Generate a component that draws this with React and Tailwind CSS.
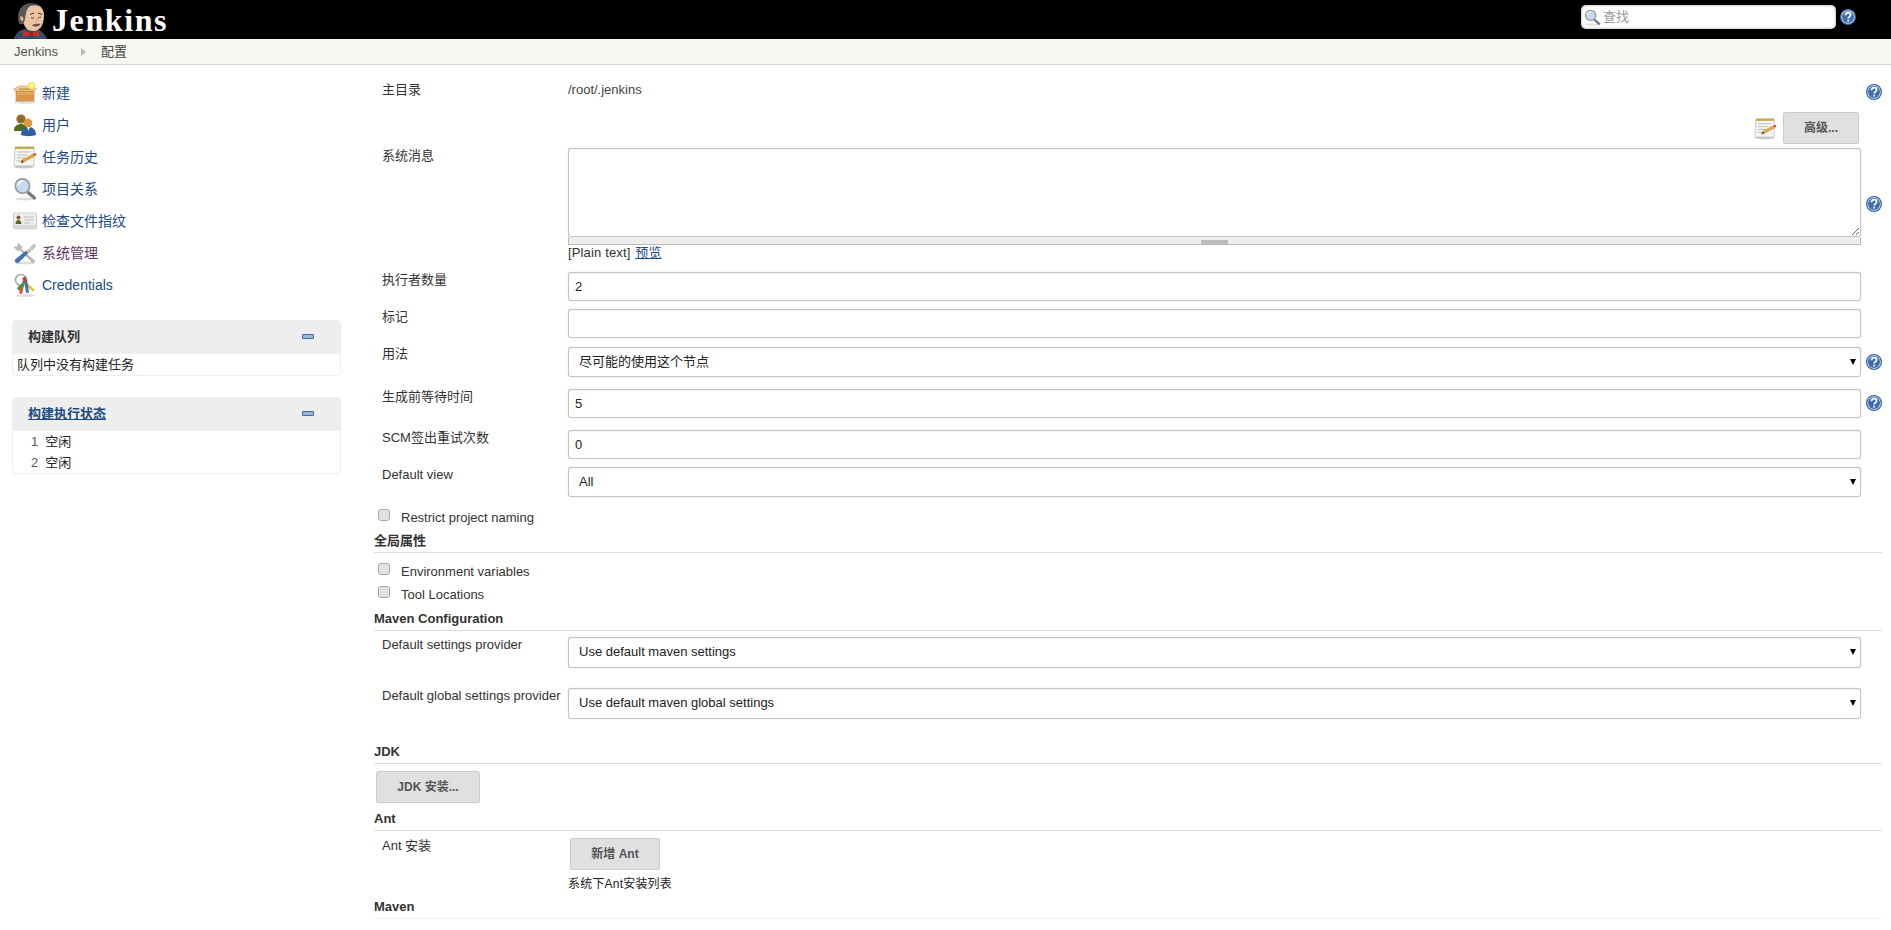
import React from "react";

const HelpIcon = ({ className = "" }) => (
  <svg viewBox="0 0 16 16" className={`w-4 h-4 shrink-0 ${className}`}>
    <circle cx="8" cy="8" r="8" fill="#3c66a8" />
    <circle cx="8" cy="8" r="6.700" fill="#e8eef6" />
    <circle cx="8" cy="8" r="6" fill="#3f6cae" />
    <path d="M5.500 6.200c0-1.600 1.100-2.500 2.600-2.500s2.500.9 2.500 2.200c0 1.900-2.400 1.800-2.400 3.600" fill="none" stroke="#fff" strokeWidth="1.700" />
    <rect x="7.300" y="10.700" width="1.800" height="1.800" fill="#fff" />
  </svg>
);

const Butler = () => (
  <svg viewBox="0 0 34 36" className="w-[34px] h-[36px] shrink-0">
    <path d="M0 36c1-5 5-9 11-10h11c5 1 9 5 11 10z" fill="#2f5068" />
    <path d="M7 12C7 5 12 1 19 1c7 0 11 5 11 11 0 9-3 16-11 16-5 0-8-3-9-7-2-1-3-5-3-9z" fill="#edc4a2" />
    <path d="M5 20C2 11 6 2 14 .5c5-.7 10 0 14 4-5-2.500-10-2.500-13-.5-2 2-3 5-3.500 9 0 2-1 5-1.500 6.500-1 2-3.500 2.500-5 .5z" fill="#55585a" />
    <path d="M7.500 13c-2 0-2 4 .5 5 2 0 2-4-.5-5z" fill="#e3b08c" />
    <path d="M16 11.500l4-1.500M24 10l4 1.500" stroke="#333" strokeWidth="1" fill="none" />
    <path d="M17 14.500c1 .8 2 .8 3 0M24 14c1 .8 2 .8 3 0" stroke="#222" strokeWidth="0.900" fill="none" />
    <path d="M23 15c0 2-.5 3.500-2 4.500" stroke="#c08d68" strokeWidth="0.800" fill="none" />
    <path d="M18 22c3-1.500 6-1.500 9-1-1.500 1-2.500 2.500-5 2.500-2 0-3-.5-4-1.500z" fill="#6b5346" />
    <path d="M9 27.500l5 1.500 3 1.500 3-1.500 5-1.500v7l-5-2-3-.5-3 .5-5 2z" fill="#d42c22" />
    <rect x="15.300" y="29.500" width="3.400" height="3.200" fill="#a81a14" />
  </svg>
);

const NewIcon = () => (
  <svg viewBox="0 0 24 24" className="w-6 h-6 shrink-0">
    <ellipse cx="12" cy="21" rx="11" ry="1.800" fill="#ddd" />
    <path d="M3 10h18v10H3z" fill="#e3a85c" stroke="#b07a35" strokeWidth="0.600" />
    <path d="M3 14h18v6H3z" fill="#d9954a" />
    <path d="M3 10L0.500 8l6-3h11l6 3L21 10z" fill="#f2cf95" stroke="#b98a4a" strokeWidth="0.500" />
    <path d="M6 8h12" stroke="#b98a4a" strokeWidth="1.200" />
    <circle cx="18.500" cy="4.500" r="3.600" fill="#f6ec3f" />
    <circle cx="18.500" cy="4.500" r="1.800" fill="#fffcc0" />
  </svg>
);

const UsersIcon = () => (
  <svg viewBox="0 0 24 24" className="w-6 h-6 shrink-0">
    <circle cx="8" cy="6" r="4.600" fill="#8f6a2e" />
    <path d="M1 18c0-5 3-7 7-7s7 2 7 7z" fill="#556b1f" />
    <circle cx="15" cy="10" r="4.400" fill="#e0993c" />
    <path d="M8 22c0-5 3-8 7.500-8S23 17 23 22c-4 1.500-11 1.500-15 0z" fill="#2f5f9e" />
    <path d="M14 14h3l-1.500 4z" fill="#fff" />
  </svg>
);

const NotepadIcon = ({ className = "w-6 h-6" }) => (
  <svg viewBox="0 0 24 24" className={`shrink-0 ${className}`}>
    <ellipse cx="11" cy="22" rx="10" ry="1.500" fill="#ccc" />
    <path d="M2 3h19v18H1z" fill="#f4f4f0" stroke="#aaa" strokeWidth="0.600" />
    <rect x="2" y="1.500" width="19" height="2.500" fill="#c6a94e" />
    <path d="M4.500 7h13M4 10h10M4 13h8M3.500 16h6" stroke="#bbb" strokeWidth="1" />
    <path d="M8 18l1-3 11-6 2 2-11 6z" fill="#e8a93a" stroke="#a3742a" strokeWidth="0.400" />
    <path d="M20 9l2 2 1.500-1.500-1.500-1.500z" fill="#d9352c" />
    <path d="M8 18l1-3 2 2z" fill="#4a4a4a" />
  </svg>
);

const SearchIcon = ({ className = "w-6 h-6" }) => (
  <svg viewBox="0 0 24 24" className={`shrink-0 ${className}`}>
    <ellipse cx="12" cy="22" rx="10" ry="1.500" fill="#ddd" />
    <path d="M14.500 15l7 6" stroke="#777" strokeWidth="3.200" strokeLinecap="round" />
    <circle cx="9.500" cy="9" r="8" fill="#9a9a9a" />
    <circle cx="9.500" cy="9" r="6.300" fill="#c5daf2" />
    <path d="M5 8c.5-2.500 2.500-4 5-4" stroke="#fff" strokeWidth="1.500" fill="none" />
  </svg>
);

const CardIcon = () => (
  <svg viewBox="0 0 24 24" className="w-6 h-6 shrink-0">
    <rect x="0.500" y="4" width="23" height="16" rx="1.500" fill="#eee" stroke="#bbb" strokeWidth="0.700" />
    <rect x="1" y="16" width="22" height="3.500" fill="#d8d8d8" />
    <circle cx="5.500" cy="8.500" r="2" fill="#7b5a26" />
    <path d="M2.500 15c0-3 1.500-4 3-4s3 1 3 4z" fill="#5b6b22" />
    <path d="M11 8h10M11 11h10M11 14h7" stroke="#bdbdbd" strokeWidth="1" />
  </svg>
);

const ToolsIcon = () => (
  <svg viewBox="0 0 24 24" className="w-6 h-6 shrink-0">
    <ellipse cx="12" cy="22" rx="10" ry="1.500" fill="#ddd" />
    <path d="M5 2l4 4-1 2 14 12-2 2L7 9 4.500 9.500 1 6l3 0 1-1z" fill="#bdbdbd" stroke="#8a8a8a" strokeWidth="0.400" />
    <path d="M21 3l2 2-7 7-2-2z" fill="#c9c9c9" stroke="#8a8a8a" strokeWidth="0.400" />
    <path d="M13 10l2 2L6 21c-1 1-2.500 1-3.500 0s-.5-2 .5-3z" fill="#3f74b5" stroke="#2a5288" strokeWidth="0.400" />
  </svg>
);

const KeysIcon = () => (
  <svg viewBox="0 0 24 24" className="w-6 h-6 shrink-0">
    <ellipse cx="12" cy="22.500" rx="10" ry="1.300" fill="#ddd" />
    <circle cx="8" cy="7" r="5.500" fill="none" stroke="#aaa" strokeWidth="1.600" />
    <path d="M12 8l10 9-2 1.500-9-7z" fill="#e4c53c" />
    <path d="M11 7l2 13 3-.5-2-13z" fill="#3f74b5" />
    <path d="M10 7L6 20l3 1 3-13z" fill="#e0483a" />
    <path d="M11 8L4 15l2 3 6-8z" fill="#3c9a3a" />
    <circle cx="11.500" cy="6" r="2" fill="#d9352c" />
  </svg>
);

const navItems = [
  { icon: <NewIcon />, label: "新建" },
  { icon: <UsersIcon />, label: "用户" },
  { icon: <NotepadIcon />, label: "任务历史" },
  { icon: <SearchIcon />, label: "项目关系" },
  { icon: <CardIcon />, label: "检查文件指纹" },
  { icon: <ToolsIcon />, label: "系统管理", visited: true },
  { icon: <KeysIcon />, label: "Credentials" },
];

const Collapse = () => (
  <span className="block w-3 h-[5px] bg-[#9db6d8] border border-[#3f69a8] rounded-[1px]"></span>
);

const Panel = ({ title, link, children, className = "" }) => (
  <div className={`ml-3 mr-[30px] w-[329px] rounded-[4px] border border-[#eeeeee] ${className}`}>
    <div className="h-[33px] pb-[2px] bg-[#eeeeee] flex items-center justify-between pl-[15px] pr-[26px]">
      <span className={`font-bold text-[13px] ${link ? "text-[#204a87] underline" : "text-[#333]"}`}>{title}</span>
      <Collapse />
    </div>
    {children}
  </div>
);

const fieldBase =
  "block w-full rounded-[3px] border border-[#c4c4c4] shadow-[0_0_1px_#bbb,inset_0_1px_1px_rgba(0,0,0,0.05)] bg-white text-[13px] text-[#222] outline-none";

const TextField = ({ value = "" }) => (
  <input type="text" defaultValue={value} className={`${fieldBase} h-[29px] px-[6px]`} />
);

const SelectField = ({ value, tall }) => (
  <div className="relative">
    <select defaultValue={value} className={`${fieldBase} appearance-none pl-[10px] ${tall ? "h-[31px] pb-[2px]" : "h-[30px]"}`}>
      <option>{value}</option>
    </select>
    <span className="absolute right-[5px] top-[12px] w-0 h-0 border-x-[3px] border-t-[6px] border-x-transparent border-t-black"></span>
  </div>
);

// one label / field / help row of the settings table
const Row = ({ label, help, labelClass = "", className = "", children }) => (
  <div className={`flex items-start ${className}`}>
    <div className={`w-[197px] pl-[11px] shrink-0 text-[13px] leading-[15px] text-[#333] whitespace-nowrap ${labelClass}`}>{label}</div>
    <div className="w-[1293px] shrink-0">{children}</div>
    <div className="w-[21px] shrink-0 pl-[5px]">{help && <HelpIcon className={help} />}</div>
  </div>
);

const Section = ({ title, className = "" }) => (
  <div className={`h-5 ml-[3px] border-b border-[#dddddd] font-bold text-[13px] leading-[16px] text-[#333] ${className}`}>{title}</div>
);

const Check = ({ label, className = "" }) => (
  <div className={`flex items-start h-4 pl-[7px] ${className}`}>
    <input type="checkbox" className="appearance-none w-3 h-3 rounded-[3px] border border-[#a8a8a8] bg-[#e2e2e2] shrink-0" />
    <span className="ml-[11px] text-[13px] leading-[15px] mt-[1px] text-[#333]">{label}</span>
  </div>
);

const Btn = ({ children, className = "" }) => (
  <button className={`h-8 bg-[#e0e0e0] border border-[#cccccc] rounded-[2px] font-bold text-[12px] text-[#555] ${className}`}>
    {children}
  </button>
);

export default function App() {
  return (
    <div className="min-h-screen bg-white text-[#333] font-['Liberation_Sans','Noto_Sans_CJK_SC',sans-serif]">
      {/* Top bar */}
      <header className="h-[39px] bg-black flex items-start overflow-hidden">
        <div className="flex items-start pl-[14px] pt-[3px]">
          <Butler />
          <span className="ml-[4px] mt-[-1px] font-['Liberation_Serif',serif] font-bold text-[32px] leading-[36px] tracking-[1.6px] text-white">Jenkins</span>
        </div>
        <div className="ml-auto flex items-center pt-[5px] pr-[35px]">
          <div className="w-[255px] h-[24px] bg-white rounded-[5px] flex items-center pl-[3px] shadow-[inset_0_0_3px_#999]">
            <SearchIcon className="w-[17px] h-[17px]" />
            <span className="ml-[2px] text-[13px] text-[#999]">查找</span>
          </div>
          <HelpIcon className="ml-1" />
        </div>
      </header>

      {/* Breadcrumb */}
      <nav className="h-[26px] bg-[#f6f8f2] border-b border-[#d3d7cf] flex items-center text-[13px] pl-[14px]">
        <span className="text-[#555753]">Jenkins</span>
        <span className="ml-[23px] w-0 h-0 border-y-[4px] border-l-[5px] border-y-transparent border-l-[#b6bcb0]"></span>
        <span className="ml-[15px] text-[#444]">配置</span>
      </nav>

      <div className="flex items-start">
        {/* Sidebar */}
        <aside className="w-[371px] shrink-0 pt-3">
          <ul>
            {navItems.map((item) => (
              <li key={item.label} className="h-8 flex items-center pl-[13px]">
                {item.icon}
                <a className={`ml-[5px] text-[14px] ${item.visited ? "text-[#5c3566]" : "text-[#204a87]"}`}>{item.label}</a>
              </li>
            ))}
          </ul>
          <Panel title="构建队列" className="mt-[19px]">
            <div className="h-[21px] pl-[4px] text-[13px] leading-[22px] text-[#222]">队列中没有构建任务</div>
          </Panel>
          <Panel title="构建执行状态" link className="mt-[21px]">
            <div className="h-[42px] text-[13px] leading-[21px] text-[#222]">
              <div className="pl-[18px]"><span className="text-[#555]">1</span><span className="ml-[7px]">空闲</span></div>
              <div className="pl-[18px]"><span className="text-[#555]">2</span><span className="ml-[7px]">空闲</span></div>
            </div>
          </Panel>
        </aside>

        {/* Config form */}
        <main className="w-[1511px] shrink-0">
          <Row label="主目录" help="mt-[2px]" className="h-[47px] pt-[17px]">
            <span className="text-[13px] leading-[15px] block text-[#444]">/root/.jenkins</span>
          </Row>

          <div className="h-9 w-[1488px] flex justify-end items-start gap-[6px]">
            <NotepadIcon className="w-[23px] h-[23px] mt-[5px]" />
            <Btn className="w-[76px]">高级...</Btn>
          </div>

          <Row label="系统消息" className="h-[124px]">
            <div className="relative">
              <textarea className={`${fieldBase} h-[89px] p-[6px]`}></textarea>
              <div className="h-2 bg-[#eeeeee] border-x border-b border-[#bbbbbb] flex items-end justify-center">
                <span className="block w-[27px] h-[4px] bg-[#bbbbbb]"></span>
              </div>
              <div className="text-[13px] leading-[15px] tracking-[0.15px] text-[#333]">[Plain text] <a className="ml-[1px] text-[#204a87] underline">预览</a></div>
              <span className="absolute -right-[21px] top-[48px]"><HelpIcon /></span>
            </div>
          </Row>

          <Row label="执行者数量" className="h-[37px]"><TextField value="2" /></Row>
          <Row label="标记" className="h-[38px]"><TextField /></Row>
          <Row label="用法" help="mt-[7px]" labelClass="-mt-px" className="h-[42px]"><SelectField value="尽可能的使用这个节点" /></Row>
          <Row label="生成前等待时间" help="mt-[6px]" className="h-[41px]"><TextField value="5" /></Row>
          <Row label="SCM签出重试次数" className="h-[37px]"><TextField value="0" /></Row>
          <Row label="Default view" className="h-[30px]"><SelectField value="All" /></Row>

          <Check label="Restrict project naming" className="mt-[12px]" />
          <Section title="全局属性" className="mt-[8px]" />
          <Check label="Environment variables" className="mt-[10px]" />
          <Check label="Tool Locations" className="mt-[7px]" />
          <Section title="Maven Configuration" className="mt-[9px]" />
          <Row label="Default settings provider" className="h-[51px] mt-[6px]"><SelectField value="Use default maven settings" tall /></Row>
          <Row label="Default global settings provider" className="h-[51px]"><SelectField value="Use default maven global settings" tall /></Row>

          <Section title="JDK" className="mt-[5px]" />
          <Btn className="w-[104px] ml-[5px] mt-[7px] block">JDK 安装...</Btn>
          <Section title="Ant" className="mt-[8px]" />
          <Row label="Ant 安装" className="mt-[7px] h-[55px]">
            <Btn className="w-[90px] ml-[2px] block">新增 Ant</Btn>
            <div className="mt-[7px] text-[12px] leading-[15px] tracking-[0.2px] text-[#222]">系统下Ant安装列表</div>
          </Row>
          <Section title="Maven" className="mt-[6px] border-[#eeeeee]" />
        </main>
      </div>
    </div>
  );
}
